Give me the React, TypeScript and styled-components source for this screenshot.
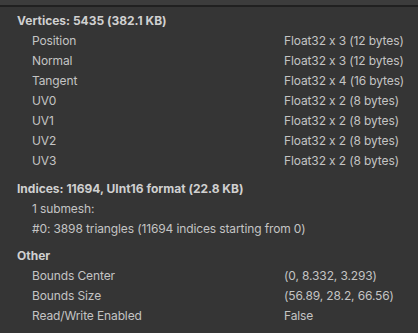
import React from "react";
import styled, { createGlobalStyle } from "styled-components";

const Global = createGlobalStyle`
  html, body { margin: 0; padding: 0; background: #353535; }
  body {
    font-family: Inter, "Noto Sans", sans-serif;
    font-feature-settings: "calt" 0;
  }
`;

const Panel = styled.div`
  width: 418px;
  height: 333px;
  background: #353535;
  display: flex;
  flex-direction: column;
  overflow: hidden;
`;

const TopStrip = styled.div`
  height: 5px;
  background: #3c3c3c;
  border-bottom: 2px solid #202020;
`;

const Body = styled.div`
  display: flex;
  flex-direction: column;
  padding: 4px 0 0 17px;
`;

const Section = styled.section<{ $top?: number }>`
  display: flex;
  flex-direction: column;
  margin-top: ${(p) => p.$top ?? 0}px;
`;

const Header = styled.div`
  height: 20px;
  line-height: 20px;
  font-size: 12px;
  font-weight: 700;
  color: #d0d0d0;
  white-space: nowrap;
`;

const Row = styled.div<{ $full?: boolean }>`
  display: ${(p) => (p.$full ? "block" : "grid")};
  grid-template-columns: 252px 1fr;
  height: 20px;
  line-height: 20px;
  padding-left: 15px;
  font-size: 12px;
  letter-spacing: -0.12px;
  color: #c4c4c4;
  white-space: nowrap;
`;

const Cell = styled.span``;

type R = [string, string];

const vertices: R[] = [
  ["Position", "Float32 x 3 (12 bytes)"],
  ["Normal", "Float32 x 3 (12 bytes)"],
  ["Tangent", "Float32 x 4 (16 bytes)"],
  ["UV0", "Float32 x 2 (8 bytes)"],
  ["UV1", "Float32 x 2 (8 bytes)"],
  ["UV2", "Float32 x 2 (8 bytes)"],
  ["UV3", "Float32 x 2 (8 bytes)"],
];

const other: R[] = [
  ["Bounds Center", "(0, 8.332, 3.293)"],
  ["Bounds Size", "(56.89, 28.2, 66.56)"],
  ["Read/Write Enabled", "False"],
];

const Rows = ({ rows }: { rows: R[] }) => (
  <>
    {rows.map(([k, v], i) => (
      <Row key={i}>
        <Cell>{k}</Cell>
        <Cell>{v}</Cell>
      </Row>
    ))}
  </>
);

export default function App() {
  return (
    <>
      <Global />
      <Panel>
        <TopStrip />
        <Body>
          <Section>
            <Header>Vertices: 5435 (382.1 KB)</Header>
            <Rows rows={vertices} />
          </Section>
          <Section $top={8}>
            <Header>Indices: 11694, UInt16 format (22.8 KB)</Header>
            <Row $full>1 submesh:</Row>
            <Row $full>#0: 3898 triangles (11694 indices starting from 0)</Row>
          </Section>
          <Section $top={7}>
            <Header>Other</Header>
            <Rows rows={other} />
          </Section>
        </Body>
      </Panel>
    </>
  );
}
